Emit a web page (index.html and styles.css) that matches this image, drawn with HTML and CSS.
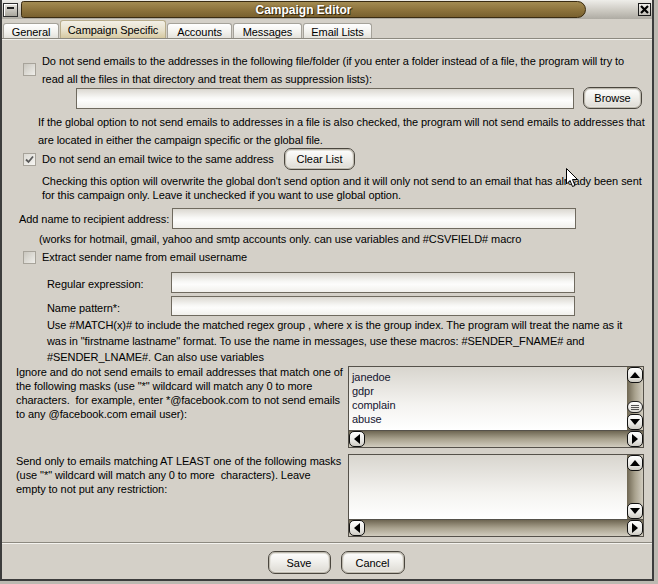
FILE: index.html
```html
<!DOCTYPE html>
<html>
<head>
<meta charset="utf-8">
<title>Campaign Editor</title>
<link rel="stylesheet" href="styles.css">
</head>
<body>
<div class="window">
  <div class="titlebar">
    <div class="sysicon"><span class="sysdash"></span></div>
    <div class="titlepill"><span class="titletext">Campaign Editor</span></div>
    <div class="closebtn">
      <svg width="9" height="9" viewBox="0 0 9 9"><path d="M1 1 L8 8 M8 1 L1 8" stroke="#000" stroke-width="2.2" fill="none"/></svg>
    </div>
  </div>
  <div class="tabs">
    <div class="tab t-general">General</div>
    <div class="tab t-campaign active">Campaign Specific</div>
    <div class="tab t-accounts">Accounts</div>
    <div class="tab t-messages">Messages</div>
    <div class="tab t-lists">Email Lists</div>
  </div>
  <div class="panel">
    <div class="row opt1">
      <span class="cb"></span>
      <div class="lines lh18">Do not send emails to the addresses in the following file/folder (if you enter a folder instead of a file, the program will try to<br>read all the files in that directory and treat them as suppression lists):</div>
    </div>
    <div class="row filerow">
      <div class="input file-input"></div>
      <div class="btn browse">Browse</div>
    </div>
    <div class="lines lh18 note1">If the global option to not send emails to addresses in a file is also checked, the program will not send emails to addresses that<br>are located in either the campaign specific or the global file.</div>
    <div class="row opt2">
      <span class="cb checked">
        <svg width="11" height="11" viewBox="0 0 11 11"><path d="M2 5.5 L4.5 8 L9 2.5" stroke="#5a5a5a" stroke-width="1.8" fill="none"/></svg>
      </span>
      <span class="opt2-label">Do not send an email twice to the same address</span>
      <div class="btn clearlist">Clear List</div>
    </div>
    <div class="lines lh14 note2">Checking this option will overwrite the global don't send option and it will only not send to an email that has already been sent<br>for this campaign only. Leave it unchecked if you want to use global option.</div>
    <div class="row addname">
      <span class="addname-label">Add name to recipient address:</span>
      <div class="input addname-input"></div>
    </div>
    <div class="lines lh14 note3">(works for hotmail, gmail, yahoo and smtp accounts only. can use variables and #CSVFIELD# macro</div>
    <div class="row opt3">
      <span class="cb"></span>
      <span>Extract sender name from email username</span>
    </div>
    <div class="row field regex">
      <span class="field-label">Regular expression:</span>
      <div class="input field-input"></div>
    </div>
    <div class="row field pattern">
      <span class="field-label pattern-label">Name pattern*:</span>
      <div class="input field-input pattern-input"></div>
    </div>
    <div class="lines lh16 note4">Use #MATCH(x)# to include the matched regex group , where x is the group index. The program will treat the name as it<br>was in "firstname lastname" format. To use the name in messages, use these macros: #SENDER_FNAME# and<br>#SENDER_LNAME#. Can also use variables</div>
    <div class="row maskrow ignore">
      <div class="lines lh14 masktext">Ignore and do not send emails to email addresses that match one of<br>the following masks (use "*" wildcard will match any 0 to more<br>characters.&nbsp; for example, enter *@facebook.com to not send emails<br>to any @facebook.com email user):</div>
      <div class="listbox lb1">
        <div class="lb-content">
          <div>janedoe</div>
          <div>gdpr</div>
          <div>complain</div>
          <div>abuse</div>
        </div>
        <div class="vscroll">
          <div class="sbtn"><svg width="10" height="6" viewBox="0 0 10 6"><path d="M5 0 L10 6 L0 6 Z" fill="#000"/></svg></div>
          <div class="vtrack"><div class="thumb"><i></i><i></i><i></i></div></div>
          <div class="sbtn"><svg width="10" height="6" viewBox="0 0 10 6"><path d="M0 0 L10 0 L5 6 Z" fill="#000"/></svg></div>
        </div>
        <div class="hscroll">
          <div class="sbtn"><svg width="6" height="10" viewBox="0 0 6 10"><path d="M6 0 L6 10 L0 5 Z" fill="#000"/></svg></div>
          <div class="htrack"></div>
          <div class="sbtn"><svg width="6" height="10" viewBox="0 0 6 10"><path d="M0 0 L6 5 L0 10 Z" fill="#000"/></svg></div>
        </div>
      </div>
    </div>
    <div class="row maskrow sendonly">
      <div class="lines lh14 masktext">Send only to emails matching AT LEAST one of the following masks<br>(use "*" wildcard will match any 0 to more&nbsp; characters). Leave<br>empty to not put any restriction:</div>
      <div class="listbox lb2">
        <div class="lb-content"></div>
        <div class="vscroll">
          <div class="sbtn"><svg width="10" height="6" viewBox="0 0 10 6"><path d="M5 0 L10 6 L0 6 Z" fill="#000"/></svg></div>
          <div class="vtrack"></div>
          <div class="sbtn"><svg width="10" height="6" viewBox="0 0 10 6"><path d="M0 0 L10 0 L5 6 Z" fill="#000"/></svg></div>
        </div>
        <div class="hscroll">
          <div class="sbtn"><svg width="6" height="10" viewBox="0 0 6 10"><path d="M6 0 L6 10 L0 5 Z" fill="#000"/></svg></div>
          <div class="htrack"></div>
          <div class="sbtn"><svg width="6" height="10" viewBox="0 0 6 10"><path d="M0 0 L6 5 L0 10 Z" fill="#000"/></svg></div>
        </div>
      </div>
    </div>
  </div>
  <div class="footer">
    <div class="btn footbtn">Save</div>
    <div class="btn footbtn">Cancel</div>
  </div>
  <svg class="cursor" width="13" height="20" viewBox="0 0 13 20"><path d="M0.5 0.5 L0.5 16 L4 12.5 L6.5 18.5 L9 17.5 L6.5 11.5 L11.5 11.5 Z" fill="#fff" stroke="#000" stroke-width="1"/></svg>
</div>
</body>
</html>
```

FILE: styles.css
```css
html, body {
  margin: 0;
  padding: 0;
}
body {
  width: 658px;
  height: 584px;
  overflow: hidden;
  background: #bcb9b1;
  font-family: "Liberation Sans", Arial, sans-serif;
  font-size: 11px;
  letter-spacing: -0.07px;
  color: #000;
}
.window {
  position: relative;
  width: 654px;
  height: 581px;
  box-sizing: border-box;
  border-left: 2px solid #3c3c3c;
  border-right: 2px solid #3c3c3c;
  border-bottom: 2px solid #3c3c3c;
  background: #d4d0c8;
  display: flex;
  flex-direction: column;
}

/* title bar */
.titlebar {
  height: 19px;
  flex: none;
  display: flex;
  align-items: flex-start;
  background: linear-gradient(#eeede9, #c9c6be 60%, #aeaba3);
}
.sysicon {
  width: 13px;
  height: 12px;
  margin: 3px 0 0 1px;
  border: 1px solid #2e2e2e;
  background: linear-gradient(#e8e6e0, #a8a59c);
  box-shadow: inset 1px 1px 0 #fff;
  position: relative;
}
.sysdash {
  display: block;
  width: 7px;
  height: 2px;
  background: #202020;
  margin: 3px auto 0;
}
.titlepill {
  width: 563px;
  height: 15px;
  margin: 1px 0 0 3px;
  border: 1px solid #3a2c12;
  border-radius: 3px 10px 10px 3px;
  background-color: #a88d50;
  background-image: radial-gradient(circle, rgba(70, 50, 15, 0.45) 0.6px, transparent 0.9px), linear-gradient(#c9b06e, #a88c4e 55%, #8d733c);
  background-size: 2px 2px, 100% 100%;
  display: flex;
  align-items: center;
  justify-content: center;
}
.titletext {
  color: #fff;
  font-weight: bold;
  font-size: 12px;
  letter-spacing: 0;
  text-shadow: 1px 1px 0 #3a2a0e, 0 0 2px #5a4419;
}
.closebtn {
  width: 11px;
  height: 11px;
  margin: 3px 0 0 52px;
  border: 1px solid #1a1a1a;
  background: linear-gradient(#f0efeb, #c4c1b9);
  display: flex;
  align-items: center;
  justify-content: center;
}

/* tabs */
.tabs {
  height: 19px;
  flex: none;
  display: flex;
  align-items: flex-end;
  padding-left: 1px;
  gap: 1px;
}
.tab {
  height: 15px;
  box-sizing: border-box;
  padding-top: 1px;
  text-align: center;
  border: 1px solid #a5a29a;
  border-bottom: none;
  border-radius: 3px 3px 0 0;
  background: linear-gradient(#ffffff, #f2f1ed 60%, #e4e2dc);
  line-height: 14px;
}
.tab.active {
  height: 18px;
  padding-top: 2px;
  border-color: #b8ad8c;
  background: linear-gradient(#f2efe6, #e7e0ca 55%, #d6c9a1);
}
.t-general { width: 56px; }
.t-campaign { width: 106px; }
.t-accounts { width: 65px; }
.t-messages { width: 69px; }
.t-lists { width: 69px; }

/* panel */
.panel {
  flex: 1;
  border-top: 1px solid #8c8980;
  border-bottom: 1px solid #8c8980;
  box-shadow: inset 0 1px 0 #f2f1ed;
  padding-top: 13px;
}
.row {
  display: flex;
  align-items: center;
}
.lines {
  white-space: nowrap;
}
.lh18 { line-height: 18px; }
.lh14 { line-height: 14px; }
.lh16 { line-height: 16px; }

.cb {
  width: 11px;
  height: 11px;
  flex: none;
  border: 1px solid #a7a39a;
  background: linear-gradient(135deg, #c9c6be, #efeeea);
  display: inline-flex;
  align-items: center;
  justify-content: center;
}
.cb.checked {
  background: linear-gradient(135deg, #dcdad4, #f6f5f2);
}

.opt1 {
  margin-left: 21px;
}
.opt1 .cb { margin-right: 6px; margin-top: -1px; }

.input {
  box-sizing: border-box;
  height: 21px;
  border: 1px solid #6f6a5f;
  background: linear-gradient(#dbd8d1, #f7f7f5 45%, #fdfdfc 60%, #f1f0ec);
}
.filerow {
  align-items: flex-start;
  margin-left: 74px;
}
.file-input { width: 498px; }

.btn {
  box-sizing: border-box;
  height: 22px;
  border: 1px solid #4a463e;
  border-radius: 7px;
  background: linear-gradient(#ffffff, #f1f0ec 45%, #dcd9d2);
  box-shadow: inset 0 0 0 1px #bdb9ae, inset 0 0 0 2px #e6e4de;
  display: flex;
  align-items: center;
  justify-content: center;
}
.browse {
  width: 59px;
  margin: -1px 0 0 9px;
}
.note1 {
  margin: 4px 0 0 36px;
}
.opt2 {
  height: 22px;
  margin: -1px 0 0 21px;
}
.opt2 .cb { margin-right: 6px; }
.opt2-label { width: 242px; }
.clearlist { width: 71px; }

.note2 {
  margin: 4px 0 0 40px;
}
.addname {
  margin: 6px 0 0 17px;
}
.addname-label { width: 153px; }
.addname-input { width: 404px; }
.note3 {
  margin: 3px 0 0 37px;
}
.opt3 {
  height: 14px;
  margin: 4px 0 0 21px;
}
.opt3 .cb { margin-right: 6px; }

.field {
  margin-left: 45px;
}
.regex { margin-top: 8px; }
.pattern { margin-top: 3px; }
.field-label { width: 124px; padding-top: 2px; }
.pattern-label { padding-top: 4px; }
.field-input { width: 404px; }
.pattern-input { height: 20px; }

.note4 {
  margin: 1px 0 0 45px;
}

.maskrow {
  align-items: flex-start;
  margin-left: 14px;
}
.masktext {
  width: 332px;
}
.ignore .listbox { margin-top: 1px; height: 82px; }
.sendonly { margin-top: 6px; }
.sendonly .listbox { height: 83px; }

.listbox {
  box-sizing: border-box;
  width: 296px;
  border: 1px solid #55514a;
  display: grid;
  grid-template-columns: 1fr 16px;
  grid-template-rows: 1fr 16px;
  background: #d4d0c8;
}
.lb-content {
  background: linear-gradient(#d8d5ce, #f4f3f0 60%, #ffffff);
  padding: 3px 3px;
  line-height: 14px;
  color: #141430;
  border-bottom: 1px solid #55514a;
}
.vscroll {
  display: flex;
  flex-direction: column;
  background: linear-gradient(to right, #6e6652, #a9a28e 50%, #d1ccbf);
  border-bottom: 1px solid #55514a;
}
.vtrack {
  flex: 1;
  display: flex;
  flex-direction: column;
  justify-content: flex-end;
}
.thumb {
  height: 10px;
  margin: 0 0 1px 0;
  border: 1px solid #1e1e1e;
  border-radius: 6px;
  background: linear-gradient(#ffffff, #dad7d0);
  display: flex;
  flex-direction: column;
  align-items: center;
  justify-content: center;
  gap: 1px;
}
.thumb i {
  display: block;
  width: 8px;
  height: 1px;
  background: #555;
}
.sbtn {
  box-sizing: border-box;
  width: 16px;
  height: 16px;
  flex: none;
  border: 1px solid #111;
  border-radius: 5px;
  background: linear-gradient(#ffffff, #e9e8e4 60%, #cfccc4);
  display: flex;
  align-items: center;
  justify-content: center;
}
.hscroll {
  grid-column: 1 / 3;
  display: flex;
  background: linear-gradient(#6e6652, #a9a28e 50%, #d1ccbf);
}
.htrack { flex: 1; }

/* footer */
.footer {
  height: 36px;
  flex: none;
  display: flex;
  justify-content: center;
  gap: 10px;
  padding-top: 8px;
  box-sizing: border-box;
  box-shadow: inset 0 1px 0 #f4f3ef;
  padding-left: 18px;
}
.footbtn {
  width: 63px;
  height: 23px;
}
.footbtn + .footbtn { width: 64px; }

.cursor {
  position: absolute;
  left: 564px;
  top: 168px;
}
```
